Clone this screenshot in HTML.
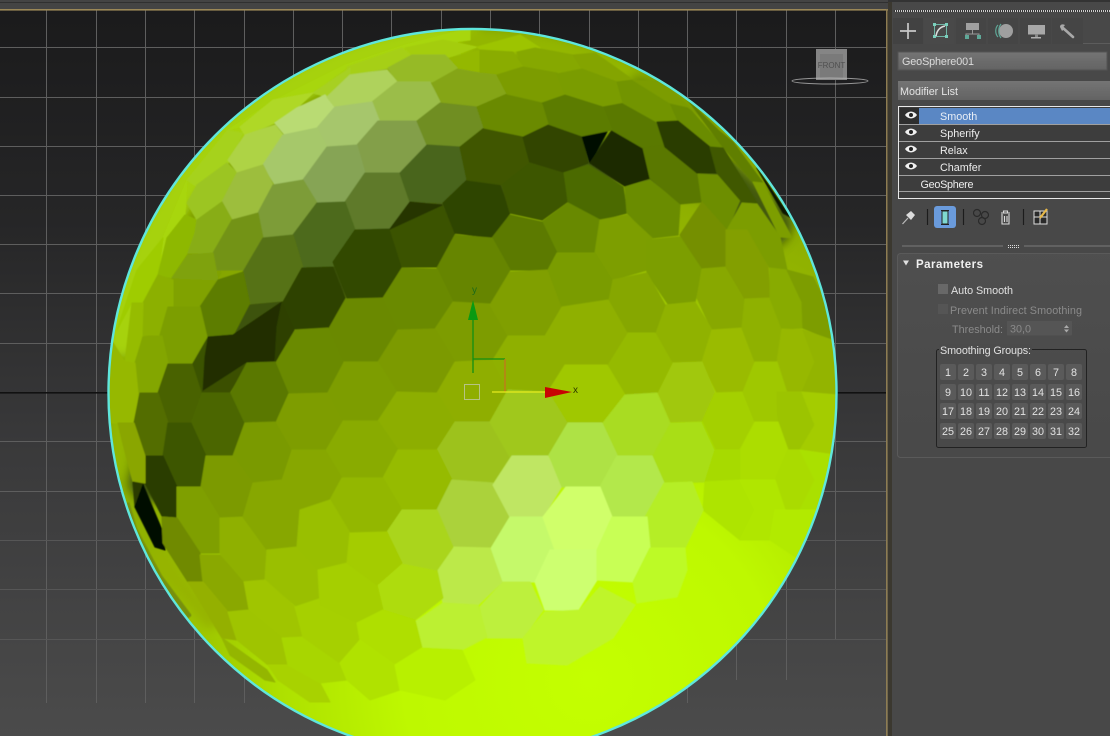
<!DOCTYPE html>
<html><head><meta charset="utf-8"><title>GeoSphere viewport</title>
<style>
html,body{margin:0;padding:0;background:#444;width:1110px;height:736px;overflow:hidden}
svg{display:block}
text{font-family:"Liberation Sans",sans-serif;font-size:10.8px}
</style></head><body>
<svg width="1110" height="736" viewBox="0 0 1110 736" xmlns="http://www.w3.org/2000/svg">
<defs>
<linearGradient id="bg" x1="0" y1="0" x2="0" y2="1"><stop offset="0" stop-color="#1a1a1b"/><stop offset=".3" stop-color="#262627"/><stop offset=".6" stop-color="#39393a"/><stop offset="1" stop-color="#4b4b4b"/></linearGradient>
<radialGradient id="ball" gradientUnits="userSpaceOnUse" cx="590" cy="680" r="620"><stop offset="0" stop-color="#c4ff00"/><stop offset=".3" stop-color="#bef800"/><stop offset=".5" stop-color="#aee000"/><stop offset=".72" stop-color="#93b500"/><stop offset="1" stop-color="#7c9c00"/></radialGradient>
<linearGradient id="fld" x1="0" y1="0" x2="0" y2="1"><stop offset="0" stop-color="#747474"/><stop offset="1" stop-color="#636363"/></linearGradient>
<linearGradient id="pan" x1="0" y1="0" x2="0" y2="1"><stop offset="0" stop-color="#4f4f4f"/><stop offset="1" stop-color="#494949"/></linearGradient>
<clipPath id="cc"><circle cx="472.5" cy="393" r="364"/></clipPath>
<filter id="soft" x="-2%" y="-2%" width="104%" height="104%"><feGaussianBlur stdDeviation=".55"/></filter>
<filter id="soft2" x="-5%" y="-5%" width="110%" height="110%"><feGaussianBlur stdDeviation="5"/></filter>
<filter id="tb" x="-2%" y="-2%" width="104%" height="104%"><feGaussianBlur stdDeviation=".3"/></filter>
</defs>

<!-- viewport -->
<rect width="888" height="736" fill="url(#bg)"/>
<g stroke-width="1" fill="none">
<path stroke="#5e5e5e" d="M46.5 10V703M96.5 10V703M145.5 10V703M194.5 10V703M244.5 10V703M293.5 10V703M342.5 10V703M391.5 10V703M441.5 10V703M490.5 10V703M539.5 10V703M589.5 10V703M638.5 10V703M687.5 10V703M736.5 10V680M786.5 10V680M835.5 10V640"/>
<path stroke="#5e5e5e" d="M0 47.5H886M0 97.5H886M0 146.5H886M0 195.5H886M0 244.5H886M0 293.5H886M0 343.5H886M0 441.5H886M0 491.5H886"/>
<path stroke="#565656" d="M0 540.5H886M0 589.5H886M0 639.5H886"/>
</g>
<rect x="0" y="392" width="886" height="1.6" fill="#111"/>

<!-- nav cube -->
<rect x="816" y="49" width="31" height="31" fill="#858585"/>
<rect x="820" y="54" width="23" height="24" fill="#7a7a7a"/>
<text x="831.5" y="68" text-anchor="middle" fill="#505050" style="font-size:8px">FRONT</text>
<ellipse cx="830" cy="81" rx="38" ry="3" fill="none" stroke="#bdbdbd" stroke-width=".9" opacity=".75"/>

<!-- sphere -->
<circle cx="472.5" cy="393" r="364" fill="url(#ball)"/>
<g clip-path="url(#cc)">
<g filter="url(#soft2)" fill="none" stroke-linecap="round" stroke-linejoin="round">
<path d="M122 340 A352 352 0 0 1 470 41" stroke="#a6d20c" stroke-width="34"/>
<path d="M470 42 A352 352 0 0 1 640 80" stroke="#93b600" stroke-width="26"/>
<path d="M640 85 L700 150 L770 240" stroke="#6f8f00" stroke-width="22"/>
<path d="M500 90 L640 110" stroke="#6a8a00" stroke-width="36"/>
<path d="M150 480 L175 410 L220 360 L290 310 L380 250 L480 195 L560 165 L640 160 L720 180 L770 225" stroke="#42590a" stroke-width="44"/>
<path d="M120 400 L118 470" stroke="#93b600" stroke-width="20"/>
<path d="M160 560 L210 620" stroke="#96b400" stroke-width="18"/>
</g>
<g filter="url(#soft)" fill="currentColor" stroke="currentColor" stroke-width="1.1" stroke-linejoin="round">
<!-- rim -->
<polygon color="#a8d60a" points="117,330 137,270 163,238 187,180 228,130 275,100 345,65 405,45 470,28 470,40 405,48 347,67 313,93 273,100 240,127 228,130 187,180 185,215 167,238 158,275 143,303 132,302"/>
<polygon color="#9fcc00" points="117,330 137,270 163,238 158,275 143,303 132,302"/>
<polygon color="#a6d21a" points="187,180 228,130 243,133 227,165 197,187"/>
<polygon color="#8eb800" points="158,275 167,238 185,215 197,220 195,237 188,253 172,278"/>
<polygon color="#80a200" points="172,278 188,254 213,254 221,273 200,307 173,307"/>
<polygon color="#8cb000" points="143,303 158,275 173,280 173,307 160,335 142,335"/>
<polygon color="#96bc00" points="125,362 132,303 143,303 142,335 135,362"/>
<!-- top rim -->
<polygon color="#a4cd08" points="405,48 443,40 477,47 450,57 412,55"/>
<polygon color="#9dc400" points="477,47 520,35 540,48 517,52 482,50"/>
<polygon color="#94b805" points="450,58 482,50 510,53 517,52 497,72 477,73 455,68"/>
<polygon color="#a6cf18" points="347,67 402,48 412,57 388,68 350,75"/>
<polygon color="#a7d020" points="313,93 350,68 350,75 327,97"/>
<polygon color="#afd827" points="240,127 273,100 313,93 297,108 275,123 245,135"/>
<polygon color="#86a800" points="517,52 535,48 573,55 582,69 557,73 523,67"/>
<polygon color="#84a400" points="573,55 595,53 633,80 617,82 582,69"/>
<polygon color="#8aac00" points="497,75 480,73 480,50 513,52 523,67"/>
<polygon color="#85a516" points="432,82 457,69 480,73 497,75 507,94 477,107 440,102"/>
<polygon color="#96ba28" points="388,68 412,55 445,55 457,68 432,82 397,82"/>
<!-- light top-left -->
<polygon color="#b9db73" points="275,123 297,108 325,95 335,107 317,128 285,135"/>
<polygon color="#afd25c" points="327,97 350,75 387,70 397,82 372,102 335,107"/>
<polygon color="#9bbd4a" points="372,102 397,82 430,82 440,102 417,120 378,120"/>
<polygon color="#a6c66c" points="317,128 335,107 372,102 379,120 357,145 327,148"/>
<polygon color="#839f4a" points="378,121 417,121 426,145 400,173 365,173 357,145"/>
<polygon color="#6f8e20" points="417,121 440,103 477,107 484,128 460,147 427,145"/>
<polygon color="#9cc521" points="197,185 227,163 237,173 222,202 197,220 187,203"/>
<polygon color="#aed345" points="228,160 245,135 275,125 283,135 263,165 238,173"/>
<polygon color="#a6c86a" points="263,165 283,135 317,128 327,147 303,180 275,185"/>
<polygon color="#86a454" points="303,180 327,147 357,145 365,173 345,202 317,203"/>
<polygon color="#9dbe3c" points="222,202 237,173 263,165 273,185 258,213 232,220"/>
<polygon color="#7d9c38" points="258,213 273,185 303,180 317,203 293,235 263,238"/>
<polygon color="#5e7a2a" points="345,202 365,173 400,173 409,202 390,229 355,230"/>
<polygon color="#4d6a1a" points="293,235 317,203 345,202 355,230 333,267 303,268"/>
<polygon color="#88ad18" points="197,220 222,202 232,220 213,253 188,253 195,233"/>
<polygon color="#739318" points="232,220 258,213 263,238 243,270 213,270 213,253"/>
<polygon color="#567213" points="263,238 293,235 303,268 282,302 250,305 243,272"/>
<polygon color="#7fa20b" points="188,255 213,253 218,280 172,278"/>
<polygon color="#5d7d00" points="200,307 218,280 243,272 250,305 235,334 207,336"/>
<!-- dark band -->
<polygon color="#334806" points="355,230 390,229 402,268 383,298 347,298 333,262"/>
<polygon color="#3b5205" points="390,229 442,205 455,233 437,267 402,267"/>
<polygon color="#4a651a" points="400,173 427,145 460,147 467,180 443,203 410,202"/>
<polygon color="#263600" points="410,202 442,205 390,229"/>
<polygon color="#2f4400" points="443,203 467,180 500,185 510,213 492,238 455,233"/>
<polygon color="#3f5704" points="460,147 484,128 523,137 530,163 503,185 467,180"/>
<polygon color="#304400" points="523,137 548,124 582,136 588,163 563,173 530,163"/>
<polygon color="#4c6a02" points="563,173 588,165 623,187 627,213 600,220 568,202"/>
<polygon color="#3e5600" points="502,185 530,163 563,173 567,202 542,220 510,213"/>
<polygon color="#061000" points="582,136 608,130 590,163"/>
<polygon color="#1c2b00" points="590,163 612,130 643,148 650,178 625,186"/>
<polygon color="#5a7900" points="603,107 623,103 657,122 663,145 643,148 612,130"/>
<polygon color="#5c7c00" points="542,103 565,94 603,107 612,130 582,136 548,124"/>
<polygon color="#6a8a06" points="477,107 507,94 542,104 548,124 523,136 484,128"/>
<polygon color="#7b9c00" points="497,75 523,67 557,73 565,94 542,102 507,94"/>
<polygon color="#7a9c00" points="557,74 582,69 617,82 625,102 603,106 565,94"/>
<polygon color="#729400" points="617,82 633,80 670,103 678,121 657,122 623,103"/>
<polygon color="#6b8c00" points="670,103 688,107 723,147 710,147 678,121"/>
<polygon color="#7c9c00" points="633,80 660,82 718,130 688,107 670,103"/>
<polygon color="#617f00" points="688,100 718,130 733,142 763,183 753,182 723,147"/>
<polygon color="#5a7803" points="643,148 665,145 697,173 702,202 680,204 650,178"/>
<polygon color="#2a3d00" points="657,122 678,121 710,147 717,173 697,173 665,147"/>
<polygon color="#6d8e00" points="698,174 718,175 740,200 727,230 702,202"/>
<polygon color="#3f5800" points="710,147 723,148 757,203 742,202 717,173"/>
<polygon color="#7d9e05" points="753,182 763,183 792,238 780,237"/>
<polygon color="#111800" points="757,168 763,177 790,217 783,213"/>
<polygon color="#7b9d00" points="742,203 757,204 780,237 787,270 770,268 747,230 727,230"/>
<polygon color="#6a8c00" points="625,187 650,180 680,205 678,235 652,238 627,213"/>
<polygon color="#678900" points="568,203 600,220 595,253 557,253 542,222"/>
<polygon color="#7d9e00" points="600,220 627,215 652,238 647,270 612,280 595,253"/>
<polygon color="#5c7a00" points="492,238 510,215 542,222 557,253 548,270 510,270"/>
<polygon color="#668500" points="437,268 455,235 492,238 510,270 490,304 453,302"/>
<!-- right side -->
<polygon color="#7c9e00" points="647,240 680,237 702,268 695,302 668,304 647,273"/>
<polygon color="#748f00" points="680,235 702,202 727,230 726,267 702,268"/>
<polygon color="#88a800" points="702,269 726,267 745,298 742,328 712,330 697,298"/>
<polygon color="#839f00" points="726,230 747,230 768,267 770,298 745,299 726,267"/>
<polygon color="#90b200" points="665,305 695,302 712,330 702,362 672,363 655,333"/>
<polygon color="#86a700" points="612,280 647,273 665,305 655,333 627,333 608,300"/>
<polygon color="#9abb00" points="712,330 742,328 755,362 743,392 717,393 702,362"/>
<polygon color="#8fb100" points="745,299 770,298 782,328 777,362 755,362 742,328"/>
<polygon color="#88ab00" points="770,268 787,270 802,302 803,328 782,329 770,298"/>
<polygon color="#7d9d00" points="787,270 813,277 828,307 832,340 803,328 802,302"/>
<polygon color="#97b800" points="782,329 803,330 815,362 802,392 777,392 777,362"/>
<polygon color="#93b400" points="803,330 832,340 838,395 815,395 802,392 815,362"/>
<polygon color="#a1c80b" points="672,363 702,362 715,393 702,422 670,423 657,393"/>
<polygon color="#95ba00" points="627,333 655,333 672,363 657,393 625,395 607,365"/>
<polygon color="#a4d000" points="715,393 743,392 755,422 740,450 715,450 702,422"/>
<polygon color="#9fc800" points="755,362 777,362 787,393 778,422 755,422 743,392"/>
<polygon color="#9cc400" points="777,392 802,392 815,425 800,450 788,450 778,422"/>
<polygon color="#a4cc00" points="802,392 838,395 835,455 815,455 800,450 815,425"/>
<polygon color="#a9de12" points="670,423 702,422 715,450 705,482 664,483 652,456"/>
<polygon color="#acdd00" points="755,422 778,422 788,450 775,480 740,480 740,450"/>
<polygon color="#a7da00" points="702,422 715,450 705,482 740,480 740,450 715,450"/>
<polygon color="#aadb00" points="788,450 800,450 815,480 800,510 775,510 775,480"/>
<polygon color="#aae000" points="800,450 835,455 825,510 800,510 815,480"/>
<polygon color="#aee400" points="705,482 740,480 755,510 740,540 703,510"/>
<polygon color="#b0e600" points="740,480 775,480 785,510 770,540 740,540 755,510"/>
<polygon color="#b2ea00" points="775,510 825,510 800,560 770,540"/>
<!-- central hexes -->
<polygon color="#6a8900" points="328,328 345,299 383,298 398,329 378,362 343,362"/>
<polygon color="#6b8a00" points="383,298 402,268 437,269 453,302 435,329 398,329"/>
<polygon color="#7d9c00" points="435,329 453,302 490,304 508,336 493,360 455,362"/>
<polygon color="#7c9a00" points="398,330 435,329 455,362 437,393 397,392 378,362"/>
<polygon color="#7d9d00" points="343,362 378,362 397,392 378,421 342,421 327,392"/>
<polygon color="#809f00" points="490,305 510,272 548,270 562,307 545,336 508,336"/>
<polygon color="#7a9c00" points="548,270 557,253 595,253 612,280 608,300 562,307"/>
<polygon color="#8fae00" points="455,362 493,360 508,390 490,422 455,422 437,393"/>
<polygon color="#8fb000" points="493,360 508,336 545,336 565,365 548,392 508,390"/>
<polygon color="#8fb000" points="545,336 562,307 608,300 627,333 607,365 565,365"/>
<polygon color="#a0c800" points="565,365 607,365 625,395 603,423 567,423 548,392"/>
<polygon color="#8dae00" points="397,392 437,393 455,422 437,450 398,450 378,421"/>
<polygon color="#89ab00" points="378,421 398,450 383,478 342,478 325,450 342,421"/>
<polygon color="#9dc21c" points="455,422 490,422 510,457 493,483 452,480 437,450"/>
<polygon color="#96bb06" points="398,450 437,450 452,480 437,510 402,510 383,478"/>
<polygon color="#a0c81d" points="508,390 548,392 567,423 548,455 510,457 490,422"/>
<polygon color="#a9dc20" points="603,423 625,395 657,393 670,423 652,456 617,456"/>
<polygon color="#7e9d00" points="288,393 327,392 342,421 325,450 290,450 275,422"/>
<polygon color="#87a700" points="290,450 325,450 342,478 330,500 300,510 281,480"/>
<polygon color="#93b700" points="342,478 383,478 402,510 387,532 350,533 330,500"/>
<polygon color="#abd23a" points="452,480 493,483 510,517 490,548 452,548 437,510"/>
<polygon color="#bfe663" points="512,456 548,456 562,486 543,517 510,517 493,485"/>
<polygon color="#aee245" points="568,423 602,423 617,455 600,487 562,487 549,455"/>
<polygon color="#b3e84b" points="617,456 652,456 664,483 647,517 612,517 600,487"/>
<polygon color="#b5ee28" points="664,483 692,482 703,510 685,548 650,548 645,517"/>
<polygon color="#c5f96a" points="510,517 543,517 557,552 535,582 503,582 490,550"/>
<polygon color="#d0ff6a" points="566,487 600,487 612,517 597,550 555,550 543,517"/>
<polygon color="#cdff70" points="550,550 597,550 597,580 578,610 545,610 535,582"/>
<polygon color="#c8ff55" points="612,517 647,517 650,548 633,582 597,580 597,550"/>
<polygon color="#bdfa25" points="633,582 650,548 685,548 687,570 677,597 637,603"/>
<polygon color="#bdf03c" points="480,607 503,582 530,582 543,610 523,638 487,638"/>
<polygon color="#bff52a" points="523,638 545,612 580,610 600,587 635,605 613,638 567,665 527,663"/>
<polygon color="#bce94a" points="437,570 453,547 490,548 502,582 478,605 443,603"/>
<polygon color="#bcf030" points="415,622 443,603 478,605 487,637 462,650 422,648"/>
<polygon color="#aedc0c" points="377,585 402,563 437,570 443,598 415,620 383,610"/>
<polygon color="#aad51e" points="387,532 402,510 437,510 453,547 437,570 402,563"/>
<!-- left side -->
<polygon color="#2f4300" points="302,268 333,267 345,298 328,328 294,330 283,302"/>
<polygon color="#6a8a00" points="275,362 294,330 328,328 343,362 327,392 288,393"/>
<polygon color="#3d5308" points="250,305 282,302 235,334"/>
<polygon color="#202e00" points="207,337 233,335 282,302 278,357 275,362 245,363 202,392 204,357"/>
<polygon color="#2e4000" points="282,302 294,330 275,362 277,327"/>
<polygon color="#3b5000" points="247,363 202,392 230,392"/>
<polygon color="#3b5200" points="207,338 192,363 202,392 204,357"/>
<polygon color="#7c9e00" points="168,307 200,307 207,337 192,363 167,363 160,335"/>
<polygon color="#83a600" points="143,337 162,336 168,363 158,393 138,393 135,363"/>
<polygon color="#96b800" points="105,330 125,362 135,363 138,393 134,423 105,423"/>
<polygon color="#4a6200" points="168,364 192,364 201,392 191,423 168,423 158,393"/>
<polygon color="#536d00" points="140,393 158,393 168,423 163,456 145,456 134,423"/>
<polygon color="#4b6600" points="202,393 232,393 244,423 232,456 206,456 191,423"/>
<polygon color="#3e5600" points="191,423 206,456 201,487 177,487 163,456 168,423"/>
<polygon color="#2c3e00" points="145,456 163,456 177,487 176,517 162,516 145,483"/>
<polygon color="#8aa600" points="134,423 145,456 145,483 133,482 122,440 118,423"/>
<polygon color="#2a3b00" points="133,482 144,484 135,507"/>
<polygon color="#000800" points="143,485 162,530 165,550 155,547 135,507"/>
<polygon color="#5a7800" points="247,363 275,362 288,393 275,422 245,423 231,393"/>
<polygon color="#7a9a00" points="245,423 275,422 291,450 281,480 253,483 233,456"/>
<polygon color="#7b9a00" points="206,456 233,456 253,483 243,517 220,518 201,487"/>
<polygon color="#7f9f00" points="177,487 201,487 220,518 221,553 200,553 177,518"/>
<polygon color="#6f8a00" points="162,517 177,518 200,553 203,582 188,582 163,543"/>
<!-- lower left -->
<polygon color="#8fb000" points="220,518 243,517 267,550 265,580 243,582 220,553"/>
<polygon color="#87a700" points="243,517 253,483 281,480 300,510 297,547 267,550"/>
<polygon color="#9abf00" points="267,550 297,547 318,570 320,605 297,607 265,580"/>
<polygon color="#99bf00" points="300,510 330,500 350,533 347,563 318,570 297,547"/>
<polygon color="#a0c500" points="243,582 265,580 295,607 302,637 282,638 248,610"/>
<polygon color="#8aa800" points="200,555 220,555 243,582 248,610 228,612 203,582"/>
<polygon color="#94b000" points="188,582 203,582 228,612 237,640 222,638"/>
<polygon color="#9fc400" points="228,612 248,610 282,638 288,665 268,665 237,640"/>
<polygon color="#94b600" points="222,638 267,670 275,682 265,680 230,655"/>
<polygon color="#a8d200" points="268,665 288,665 320,683 330,702 310,702 278,680"/>
<polygon color="#a8d600" points="282,638 303,637 340,663 347,680 320,683 288,665"/>
<polygon color="#a6d000" points="295,607 325,597 357,623 360,640 340,663 303,637"/>
<polygon color="#a5cf00" points="318,570 347,563 377,585 383,610 357,623 320,605"/>
<polygon color="#a4cc00" points="350,533 387,532 402,563 377,585 347,563"/>
<polygon color="#afdf00" points="383,610 415,620 422,648 395,665 360,640 357,623"/>
<polygon color="#b0e200" points="360,640 395,665 400,690 370,700 347,680 340,663"/>
<polygon color="#b8f000" points="422,648 462,650 475,680 445,700 400,690 395,665"/>
</g>
<path d="M127 503L135 530L160 577L190 617" fill="none" stroke="#77900a" stroke-width="5" filter="url(#soft)"/>
</g>
<circle cx="472.5" cy="393" r="364" fill="none" stroke="#5fe6dc" stroke-width="2.4"/>

<!-- gizmo -->
<g fill="none" stroke-width="1.3">
<path d="M473 320V373M473 359H505" stroke="#128f12"/>
<path d="M505 359V392" stroke="#c4761c"/>
<path d="M492 392H546" stroke="#e6ec1c"/>
<rect x="464.5" y="384.5" width="15" height="15" stroke="#b6c484" stroke-width="1"/>
</g>
<polygon points="473,300 468,320 478,320" fill="#0a9a12"/>
<polygon points="545,387 545,398 572,392" fill="#c80404"/>
<text x="472" y="293" fill="#1d6a18" style="font-size:10px">y</text>
<text x="573" y="393" fill="#2c3800" style="font-size:10px">x</text>

<!-- top bar and frame -->
<rect width="1110" height="9" fill="#444"/>
<rect y="2" width="888" height="1" fill="#303030"/>
<rect y="9" width="888" height="1.6" fill="#9a8757"/>
<rect x="886" y="9" width="1.6" height="727" fill="#8d7c52"/>

<!-- command panel -->
<rect x="888" y="0" width="222" height="736" fill="#484848"/>
<rect x="888" y="0" width="4" height="736" fill="#3b382f"/>
<rect x="888" y="0" width="222" height="2" fill="#333"/>
<g filter="url(#tb)">
<rect x="894" y="10" width="216" height="2" fill="#ddd" opacity=".9"/>
<path d="M894 11H1110" stroke="#333" stroke-width="2" stroke-dasharray="1 1"/>

<!-- tabs -->
<rect x="893" y="18" width="30" height="26" fill="#424242"/>
<rect x="924" y="18" width="30" height="26" fill="#4a4a4a"/>
<rect x="956" y="18" width="30" height="26" fill="#444"/>
<rect x="988" y="18" width="30" height="26" fill="#444"/>
<rect x="1020" y="18" width="31" height="26" fill="#444"/>
<rect x="1052" y="18" width="31" height="26" fill="#444"/>
<path d="M1083 43.5H1110" stroke="#5c5c5c"/>
<!-- plus -->
<path d="M908 23V39M900 31H916" stroke="#c8c8c8" stroke-width="1.7" fill="none"/>
<!-- modify -->
<rect x="934.5" y="24.5" width="12" height="12" fill="none" stroke="#6fb5a5" stroke-width="1"/>
<g fill="#7ad0bd"><rect x="933" y="23" width="3" height="3"/><rect x="945" y="23" width="3" height="3"/><rect x="933" y="35" width="3" height="3"/><rect x="945" y="35" width="3" height="3"/></g>
<path d="M936 36C937 30 940 27 945 26" stroke="#ddd" stroke-width="1.5" fill="none"/>
<!-- hierarchy -->
<rect x="966" y="23" width="13" height="7" fill="#a0a0a0"/>
<path d="M972.5 30V34M966 38V34H979V38" stroke="#999" stroke-width="1" fill="none"/>
<rect x="965" y="35" width="4" height="4" fill="#5fa898"/><rect x="977" y="35" width="4" height="4" fill="#5fa898"/>
<!-- motion -->
<circle cx="1006" cy="31" r="7" fill="#9f9f9f"/>
<path d="M998 25C995 28 995 34 998 37M1001 24C998 28 998 34 1001 38" stroke="#5fa898" stroke-width="1.2" fill="none"/>
<!-- display -->
<rect x="1028" y="25" width="17" height="9.5" fill="#a8a8a8"/>
<rect x="1035" y="34" width="3" height="3" fill="#8a8a8a"/><rect x="1031" y="37" width="10" height="1.5" fill="#b0b0b0"/>
<!-- utilities -->
<path d="M1063 28L1073 37" stroke="#a8a8a8" stroke-width="2.6" stroke-linecap="round"/>
<path d="M1060 27C1060 24 1063 24 1065 25L1063 27.5L1064.5 29L1062 31Z" fill="#a8a8a8"/>

<!-- name / modifier list -->
<rect x="898" y="52" width="209" height="18" fill="url(#fld)" stroke="#525252"/>
<text x="902" y="65" fill="#dcdcdc" textLength="72">GeoSphere001</text>
<rect x="898" y="81" width="212" height="19" fill="url(#fld)"/>
<text x="900" y="95" fill="#e4e4e4" textLength="58">Modifier List</text>

<!-- stack -->
<rect x="898.5" y="106.5" width="212" height="92" fill="#3c3c3c" stroke="#e8e8e8"/>
<rect x="900" y="108" width="20" height="16" fill="#2f2f2f"/>
<rect x="919" y="108" width="191" height="16" fill="#5a87c4"/>
<path d="M899 124.5H1110M899 141.5H1110M899 158.5H1110M899 175.5H1110M899 191.5H1110" stroke="#a0a0a0"/>
<g fill="#eee">
<text x="940" y="120" fill="#e8eef6">Smooth</text>
<text x="940" y="137">Spherify</text>
<text x="940" y="154">Relax</text>
<text x="940" y="171">Chamfer</text>
<text x="920.5" y="188" textLength="53">GeoSphere</text>
</g>
<path d="M905 115C908 110.5 914 110.5 917 115C914 119.5 908 119.5 905 115Z" fill="#f0f0f0"/><circle cx="911" cy="115" r="2" fill="#222"/>
<path d="M905 132C908 127.5 914 127.5 917 132C914 136.5 908 136.5 905 132Z" fill="#f0f0f0"/><circle cx="911" cy="132" r="2" fill="#222"/>
<path d="M905 149C908 144.5 914 144.5 917 149C914 153.5 908 153.5 905 149Z" fill="#f0f0f0"/><circle cx="911" cy="149" r="2" fill="#222"/>
<path d="M905 166C908 161.5 914 161.5 917 166C914 170.5 908 170.5 905 166Z" fill="#f0f0f0"/><circle cx="911" cy="166" r="2" fill="#222"/>

<!-- stack toolbar -->
<path d="M902.5 224L908 218" stroke="#bbb" stroke-width="1.2"/>
<path d="M906 215L911 211L915 215L911 220Z" fill="#dcdcdc"/>
<path d="M927.5 209V225M963.5 209V225M1023.5 209V225" stroke="#1e1e1e" stroke-width="1.2"/>
<rect x="934" y="206" width="22" height="22" rx="3" fill="#6a9bdc"/>
<rect x="942" y="211" width="6" height="13" fill="#7fd8d0" stroke="#222" stroke-width="1"/>
<path d="M941 210.5H949M941 224.5H949" stroke="#222" stroke-width="1"/>
<g fill="none" stroke="#2a2a2a" stroke-width="1.2"><circle cx="977" cy="213" r="3.5"/><circle cx="985" cy="215" r="3.5"/><circle cx="982" cy="221" r="3.5"/></g>
<path d="M1001 213H1010M1003.5 213V211H1007.5V213M1002 214V224H1009V214M1004.5 216V222M1007 216V222" fill="none" stroke="#dadada" stroke-width="1.1"/>
<rect x="1034" y="211" width="13" height="13" fill="#2c2c2c" stroke="#ddd" stroke-width="1"/>
<path d="M1034 217H1047M1040 211V224" stroke="#ddd"/>
<path d="M1040 218L1047 209" stroke="#e6b84a" stroke-width="2.2"/>

<!-- divider -->
<path d="M902 246H1003M1024 246H1110" stroke="#7a7a7a"/>
<path d="M1008 245.5H1020M1008 247.5H1020" stroke="#ddd" stroke-dasharray="1 1"/>

<!-- rollout -->
<rect x="897.5" y="253.5" width="216" height="204" rx="3" fill="url(#pan)" stroke="#5a5a5a"/>
<polygon points="903,260.5 909,260.5 906,265.5" fill="#e0e0e0"/>
<text x="916" y="268" fill="#f0f0f0" font-weight="bold" style="font-size:11.5px" textLength="67">Parameters</text>

<rect x="938" y="284" width="10" height="10" fill="#686868"/>
<text x="951" y="294" fill="#e0e0e0" textLength="62">Auto Smooth</text>
<rect x="938" y="304" width="10" height="10" fill="#545454"/>
<text x="950" y="314" fill="#8a8a8a" textLength="132">Prevent Indirect Smoothing</text>
<text x="952" y="333" fill="#8a8a8a" textLength="51">Threshold:</text>
<rect x="1007" y="321" width="65" height="14.5" rx="1" fill="#555"/>
<text x="1010" y="332.5" fill="#8a8a8a">30,0</text>
<polygon points="1066.5,325 1064,328 1069,328" fill="#aaa"/><polygon points="1066.5,332.5 1064,329.5 1069,329.5" fill="#aaa"/>

<!-- smoothing groups -->
<rect x="936.5" y="349.5" width="150" height="98" rx="2" fill="none" stroke="#232323"/>
<rect x="939" y="344" width="93" height="12" fill="#4c4c4c"/>
<text x="940" y="354" fill="#e0e0e0" textLength="91">Smoothing Groups:</text>
<g fill="#5a5a5a">
<rect x="940" y="364" width="16" height="16" rx="2"/><rect x="958" y="364" width="16" height="16" rx="2"/><rect x="976" y="364" width="16" height="16" rx="2"/><rect x="994" y="364" width="16" height="16" rx="2"/><rect x="1012" y="364" width="16" height="16" rx="2"/><rect x="1030" y="364" width="16" height="16" rx="2"/><rect x="1048" y="364" width="16" height="16" rx="2"/><rect x="1066" y="364" width="16" height="16" rx="2"/>
<rect x="940" y="384" width="16" height="16" rx="2"/><rect x="958" y="384" width="16" height="16" rx="2"/><rect x="976" y="384" width="16" height="16" rx="2"/><rect x="994" y="384" width="16" height="16" rx="2"/><rect x="1012" y="384" width="16" height="16" rx="2"/><rect x="1030" y="384" width="16" height="16" rx="2"/><rect x="1048" y="384" width="16" height="16" rx="2"/><rect x="1066" y="384" width="16" height="16" rx="2"/>
<rect x="940" y="403" width="16" height="16" rx="2"/><rect x="958" y="403" width="16" height="16" rx="2"/><rect x="976" y="403" width="16" height="16" rx="2"/><rect x="994" y="403" width="16" height="16" rx="2"/><rect x="1012" y="403" width="16" height="16" rx="2"/><rect x="1030" y="403" width="16" height="16" rx="2"/><rect x="1048" y="403" width="16" height="16" rx="2"/><rect x="1066" y="403" width="16" height="16" rx="2"/>
<rect x="940" y="423" width="16" height="16" rx="2"/><rect x="958" y="423" width="16" height="16" rx="2"/><rect x="976" y="423" width="16" height="16" rx="2"/><rect x="994" y="423" width="16" height="16" rx="2"/><rect x="1012" y="423" width="16" height="16" rx="2"/><rect x="1030" y="423" width="16" height="16" rx="2"/><rect x="1048" y="423" width="16" height="16" rx="2"/><rect x="1066" y="423" width="16" height="16" rx="2"/>
</g>
<g fill="#e2e2e2" text-anchor="middle">
<text x="948" y="376">1</text><text x="966" y="376">2</text><text x="984" y="376">3</text><text x="1002" y="376">4</text><text x="1020" y="376">5</text><text x="1038" y="376">6</text><text x="1056" y="376">7</text><text x="1074" y="376">8</text>
<text x="948" y="396">9</text><text x="966" y="396">10</text><text x="984" y="396">11</text><text x="1002" y="396">12</text><text x="1020" y="396">13</text><text x="1038" y="396">14</text><text x="1056" y="396">15</text><text x="1074" y="396">16</text>
<text x="948" y="415">17</text><text x="966" y="415">18</text><text x="984" y="415">19</text><text x="1002" y="415">20</text><text x="1020" y="415">21</text><text x="1038" y="415">22</text><text x="1056" y="415">23</text><text x="1074" y="415">24</text>
<text x="948" y="435">25</text><text x="966" y="435">26</text><text x="984" y="435">27</text><text x="1002" y="435">28</text><text x="1020" y="435">29</text><text x="1038" y="435">30</text><text x="1056" y="435">31</text><text x="1074" y="435">32</text>
</g>
</g>
</svg>
</body></html>
